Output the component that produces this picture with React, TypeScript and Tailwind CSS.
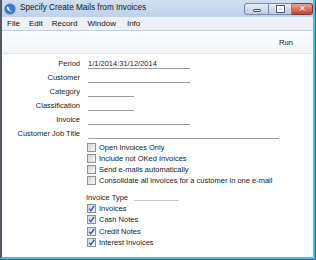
import React from "react";

const font = { fontFamily: '"Liberation Sans", Arial, sans-serif' };

function Box({ checked }: { checked?: boolean }) {
  return (
    <div className="w-[9px] h-[9px] border border-[#8d9094] bg-gradient-to-br from-[#d3d5d8] to-[#f6f6f7] flex items-center justify-center shrink-0">
      {checked && (
        <svg width="7" height="7" viewBox="0 0 7 7">
          <path d="M1 3.6 L2.8 5.6 L6.2 1" stroke="#2c55a8" strokeWidth="1.3" fill="none" />
        </svg>
      )}
    </div>
  );
}

function Field({ label, w, value }: { label: string; w: number; value?: string }) {
  return (
    <div className="flex items-center h-[14px]">
      <div className="w-[78px] text-right text-[7.5px] text-[#1a1a1a] leading-none">{label}</div>
      <div
        className="ml-[8px] h-[10px] border-b border-[#9a9a9a] text-[7.5px] leading-none text-[#1a1a1a] flex items-end pb-[1px]"
        style={{ width: w }}
      >
        {value}
      </div>
    </div>
  );
}

function Check({ label, checked, h }: { label: string; checked?: boolean; h: string }) {
  return (
    <div className={`flex items-center pl-[85px] ${h}`}>
      <Box checked={checked} />
      <span className="ml-[3px] text-[7.5px] leading-none text-[#1a1a1a]">{label}</span>
    </div>
  );
}

export default function App() {
  return (
    <div style={font} className="w-[316px] h-[260px] bg-[#1a6ea8] pr-[1px] pb-[1px]">
      <div className="w-full h-full flex flex-col border-l-2 border-l-[#525a64] border-r-2 border-b-2 border-r-[#4bbdea] border-b-[#4bbdea] bg-white overflow-hidden">
        {/* Title bar */}
        <div className="h-[17px] shrink-0 flex items-center bg-gradient-to-b from-[#cfdff1] to-[#bdd2ea] relative">
          <svg width="12" height="12" viewBox="0 0 12 12" className="ml-[2px]">
            <circle cx="6" cy="6" r="5.6" fill="#3b79c9" />
            <path d="M3 3.2 C2.4 6.5 5 9.2 8.6 8.2 C6.4 8.4 4.6 6.6 5.4 4.6 C4.6 4.6 3.6 4 3 3.2Z" fill="#fff" />
          </svg>
          <span className="ml-[4px] text-[8.2px] text-[#151515] leading-none">Specify Create Mails from Invoices</span>
          <div className="ml-auto flex items-start h-full pt-[3px] mr-[0px]">
            <div className="w-[25px] h-[12px] rounded-l-[3px] border border-[#7488a3] bg-gradient-to-b from-[#e6eef8] to-[#b9cbe1] flex items-center justify-center">
              <div className="w-[8px] h-[3px] bg-white border border-[#4b5a6e] rounded-[1px] mt-[3px]" />
            </div>
            <div className="w-[23px] h-[12px] border-y border-r border-[#7488a3] bg-gradient-to-b from-[#e6eef8] to-[#b9cbe1] flex items-center justify-center">
              <div className="w-[7px] h-[6px] border-[2px] border-white outline outline-1 outline-[#4b5a6e]" />
            </div>
            <div className="w-[21px] h-[12px] rounded-r-[3px] border-y border-r border-[#8a3a32] bg-gradient-to-b from-[#e8a493] to-[#c5412f] flex items-center justify-center">
              <span className="text-white text-[8px] font-bold leading-none" style={{ textShadow: "0 0 1px #4a1a14" }}>✕</span>
            </div>
          </div>
        </div>
        {/* Menu bar */}
        <div className="h-[14px] shrink-0 flex items-center bg-[#eef0f5] border-b border-[#c3cddb] text-[8px] text-[#111] leading-none">
          <span className="ml-[5px]">File</span>
          <span className="ml-[9px]">Edit</span>
          <span className="ml-[9px]">Record</span>
          <span className="ml-[10px]">Window</span>
          <span className="ml-[11px]">Info</span>
        </div>
        {/* Toolbar */}
        <div className="h-[23px] shrink-0 flex items-center justify-end bg-gradient-to-b from-[#fbfcfe] to-[#f3f5f9] border-b border-[#e3e6eb] pr-[20px]">
          <span className="text-[7.6px] leading-none text-[#111] mt-[1px]">Run</span>
        </div>
        {/* Form */}
        <div className="flex flex-col pt-[3px]">
          <Field label="Period" w={102} value="1/1/2014:31/12/2014" />
          <Field label="Customer" w={102} />
          <Field label="Category" w={46} />
          <Field label="Classification" w={46} />
          <Field label="Invoice" w={102} />
          <Field label="Customer Job Title" w={191} />
          <div className="mt-[1px] flex flex-col">
            <Check label="Open Invoices Only" h="h-[11px]" />
            <Check label="Include not OKed Invoices" h="h-[11px]" />
            <Check label="Send e-mails automatically" h="h-[11px]" />
            <Check label="Consolidate all invoices for a customer in one e-mail" h="h-[11px]" />
          </div>
          <div className="mt-[6px] h-[11px] flex items-center pl-[84px]">
            <span className="text-[7.5px] leading-none text-[#1a1a1a]">Invoice Type</span>
            <div className="ml-[6px] w-[45px] h-[1px] bg-[#c4c4c4] mt-[5px]" />
          </div>
          <div className="flex flex-col">
            <Check label="Invoices" checked h="h-[11.33px]" />
            <Check label="Cash Notes" checked h="h-[11.33px]" />
            <Check label="Credit Notes" checked h="h-[11.33px]" />
            <Check label="Interest Invoices" checked h="h-[11.33px]" />
          </div>
        </div>
      </div>
    </div>
  );
}
